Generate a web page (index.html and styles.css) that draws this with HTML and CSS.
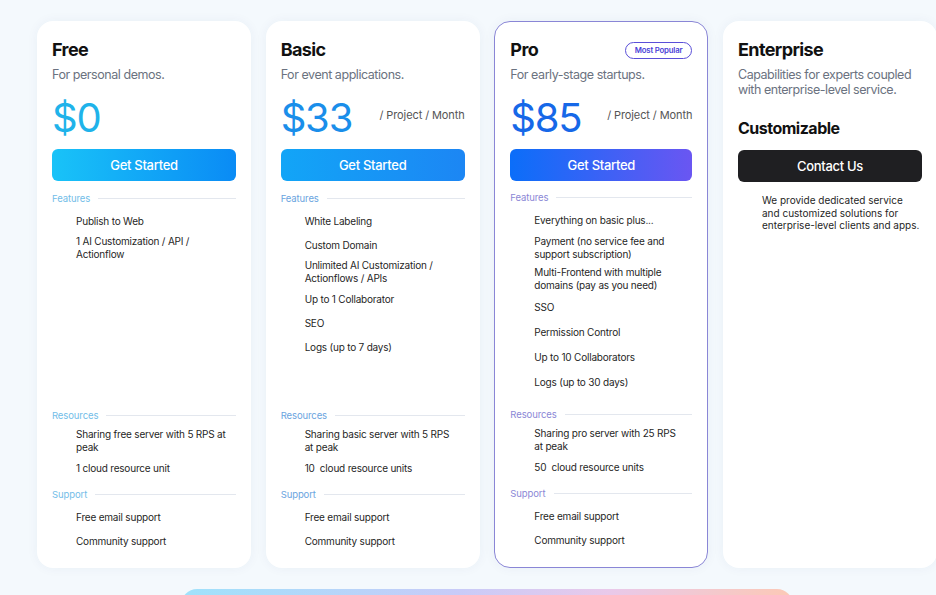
FILE: index.html
```html
<!DOCTYPE html>
<html lang="en">
<head>
<meta charset="utf-8">
<title>Pricing</title>
<link rel="stylesheet" href="styles.css">
</head>
<body>
<main class="page">
  <section class="plans">
    <article class="card card-free">
      <h2 class="title">Free</h2>
      <p class="subtitle">For personal demos.</p>
      <div class="price-row"><span class="price">$0</span></div>
      <button class="btn">Get Started</button>
      <div class="section features">
        <div class="label"><span>Features</span><i></i></div>
        <ul class="list">
          <li>Publish to Web</li>
          <li>1 AI Customization / API / Actionflow</li>
        </ul>
      </div>
      <div class="section">
        <div class="label"><span>Resources</span><i></i></div>
        <ul class="list">
          <li>Sharing free server with 5 RPS at peak</li>
          <li>1 cloud resource unit</li>
        </ul>
      </div>
      <div class="section">
        <div class="label"><span>Support</span><i></i></div>
        <ul class="list">
          <li>Free email support</li>
          <li>Community support</li>
        </ul>
      </div>
    </article>

    <article class="card card-basic">
      <h2 class="title">Basic</h2>
      <p class="subtitle">For event applications.</p>
      <div class="price-row"><span class="price">$33</span><span class="per">/ Project / Month</span></div>
      <button class="btn">Get Started</button>
      <div class="section features">
        <div class="label"><span>Features</span><i></i></div>
        <ul class="list">
          <li>White Labeling</li>
          <li>Custom Domain</li>
          <li>Unlimited AI Customization / Actionflows / APIs</li>
          <li>Up to 1 Collaborator</li>
          <li>SEO</li>
          <li>Logs (up to 7 days)</li>
        </ul>
      </div>
      <div class="section">
        <div class="label"><span>Resources</span><i></i></div>
        <ul class="list">
          <li>Sharing basic server with 5 RPS at peak</li>
          <li>10&nbsp; cloud resource units</li>
        </ul>
      </div>
      <div class="section">
        <div class="label"><span>Support</span><i></i></div>
        <ul class="list">
          <li>Free email support</li>
          <li>Community support</li>
        </ul>
      </div>
    </article>

    <article class="card card-pro">
      <div class="title-row">
        <h2 class="title">Pro</h2>
        <span class="badge">Most Popular</span>
      </div>
      <p class="subtitle">For early-stage startups.</p>
      <div class="price-row"><span class="price">$85</span><span class="per">/ Project / Month</span></div>
      <button class="btn">Get Started</button>
      <div class="section features">
        <div class="label"><span>Features</span><i></i></div>
        <ul class="list">
          <li>Everything on basic plus...</li>
          <li>Payment (no service fee and support subscription)</li>
          <li>Multi-Frontend with multiple domains (pay as you need)</li>
          <li>SSO</li>
          <li>Permission Control</li>
          <li>Up to 10 Collaborators</li>
          <li>Logs (up to 30 days)</li>
        </ul>
      </div>
      <div class="section">
        <div class="label"><span>Resources</span><i></i></div>
        <ul class="list">
          <li>Sharing pro server with 25 RPS at peak</li>
          <li>50&nbsp; cloud resource units</li>
        </ul>
      </div>
      <div class="section">
        <div class="label"><span>Support</span><i></i></div>
        <ul class="list">
          <li>Free email support</li>
          <li>Community support</li>
        </ul>
      </div>
    </article>

    <article class="card card-ent">
      <h2 class="title">Enterprise</h2>
      <p class="subtitle ent-sub">Capabilities for experts coupled with enterprise-level service.</p>
      <h3 class="custom">Customizable</h3>
      <button class="btn btn-dark">Contact Us</button>
      <p class="ent-desc">We provide dedicated service and customized solutions for enterprise-level clients and apps.</p>
    </article>
  </section>
  <div class="next-bar"></div>
</main>
</body>
</html>
```

FILE: styles.css
```css
* { box-sizing: border-box; }
html, body { margin: 0; padding: 0; }
body {
  background: #f4f9fd;
  font-family: "Inter", "Noto Sans", sans-serif;
  color: #1f1f1f;
  overflow: hidden;
  width: 936px;
  height: 595px;
}
.page {
  width: 900px;
  margin-left: 37px;
  padding-top: 21px;
}
.plans {
  display: grid;
  grid-template-columns: repeat(4, 214px);
  column-gap: 14.67px;
}
.card {
  background: #fff;
  border-radius: 16px;
  padding: 17px 15px 17px;
  box-shadow: 0 0 12px rgba(30, 60, 110, 0.05);
  display: flex;
  flex-direction: column;
  height: 547px;
}
.card-pro {
  border: 1px solid #8a86d6;
  padding: 16px 15px 16px;
}
.title {
  margin: 0;
  font-size: 18px;
  line-height: 24px;
  font-weight: 700;
  color: #111;
  letter-spacing: -0.6px;
}
.title-row {
  display: flex;
  justify-content: space-between;
  align-items: center;
}
.badge {
  font-size: 7.8px;
  font-weight: 600;
  color: #4b3fd8;
  border: 1px solid #5a4fd8;
  border-radius: 9px;
  height: 17px;
  line-height: 15px;
  padding: 0 9px;
  letter-spacing: -0.2px;
}
.subtitle {
  margin: 4px 0 0;
  font-size: 12.5px;
  line-height: 18px;
  color: #6b7280;
  letter-spacing: -0.45px;
}
.price-row {
  margin-top: 12px;
  height: 44px;
  display: flex;
  justify-content: space-between;
  align-items: center;
}
.price {
  font-size: 40px;
  line-height: 44px;
  font-weight: 400;
  letter-spacing: -1.2px;
}
.per {
  font-size: 11px;
  color: #555;
  margin-top: -6px;
  letter-spacing: -0.1px;
}
.card-free .price { color: #1fb3ea; }
.card-basic .price { color: #1a8eea; }
.card-pro .price { color: #1668e8; }
.btn {
  margin-top: 9px;
  height: 32px;
  border: 0;
  border-radius: 6px;
  color: #fff;
  font-family: inherit;
  font-size: 13px;
  font-weight: 500;
  letter-spacing: -0.3px;
  width: 100%;
  cursor: pointer;
}
.card-free .btn { background: linear-gradient(90deg, #19c3f8, #0a8bf5); }
.card-basic .btn { background: linear-gradient(90deg, #12a5f7, #1c86f4); }
.card-pro .btn { background: linear-gradient(90deg, #0b6ef9, #6a56f2); }
.btn-dark { background: #1f1f22; }
.section { margin-top: 10px; }
.section.features { margin-top: 11px; }
.label {
  display: flex;
  align-items: center;
  height: 12px;
  font-size: 9.5px;
  letter-spacing: -0.1px;
}
.label i {
  flex: 1;
  height: 1px;
  background: #e3e7ee;
  margin-left: 8px;
}
.card-free .label { color: #72bde8; }
.card-basic .label { color: #6aa4e0; }
.card-pro .label { color: #8b87d6; }
.list {
  list-style: none;
  margin: 7px 0 0;
  padding: 0;
  display: flex;
  flex-direction: column;
  gap: 4px;
}
.features .list { height: 188px; }
.card-pro .features .list { gap: 5px; }
.card-pro .features { margin-top: 10px; }
.list li {
  min-height: 20px;
  display: flex;
  align-items: center;
  padding-left: 24px;
  padding-right: 8px;
  font-size: 10px;
  line-height: 13px;
  color: #1f1f1f;
  letter-spacing: -0.2px;
}
.ent-sub {
  margin-top: 5px;
  line-height: 15px;
}
.custom {
  margin: 20px 0 0;
  font-size: 16px;
  line-height: 22px;
  font-weight: 700;
  color: #111;
  letter-spacing: -0.5px;
}
.card-ent .btn { margin-top: 11px; }
.ent-desc {
  margin: 12px 0 0;
  padding-left: 24px;
  font-size: 10px;
  line-height: 12.5px;
  color: #1f1f1f;
}
.next-bar {
  margin: 21px auto 0;
  width: 612px;
  height: 40px;
  border-radius: 16px 16px 0 0;
  background: linear-gradient(90deg, #9fe2fb 0%, #c8cbf8 45%, #e9c9ea 70%, #fcc9b6 100%);
}
```
